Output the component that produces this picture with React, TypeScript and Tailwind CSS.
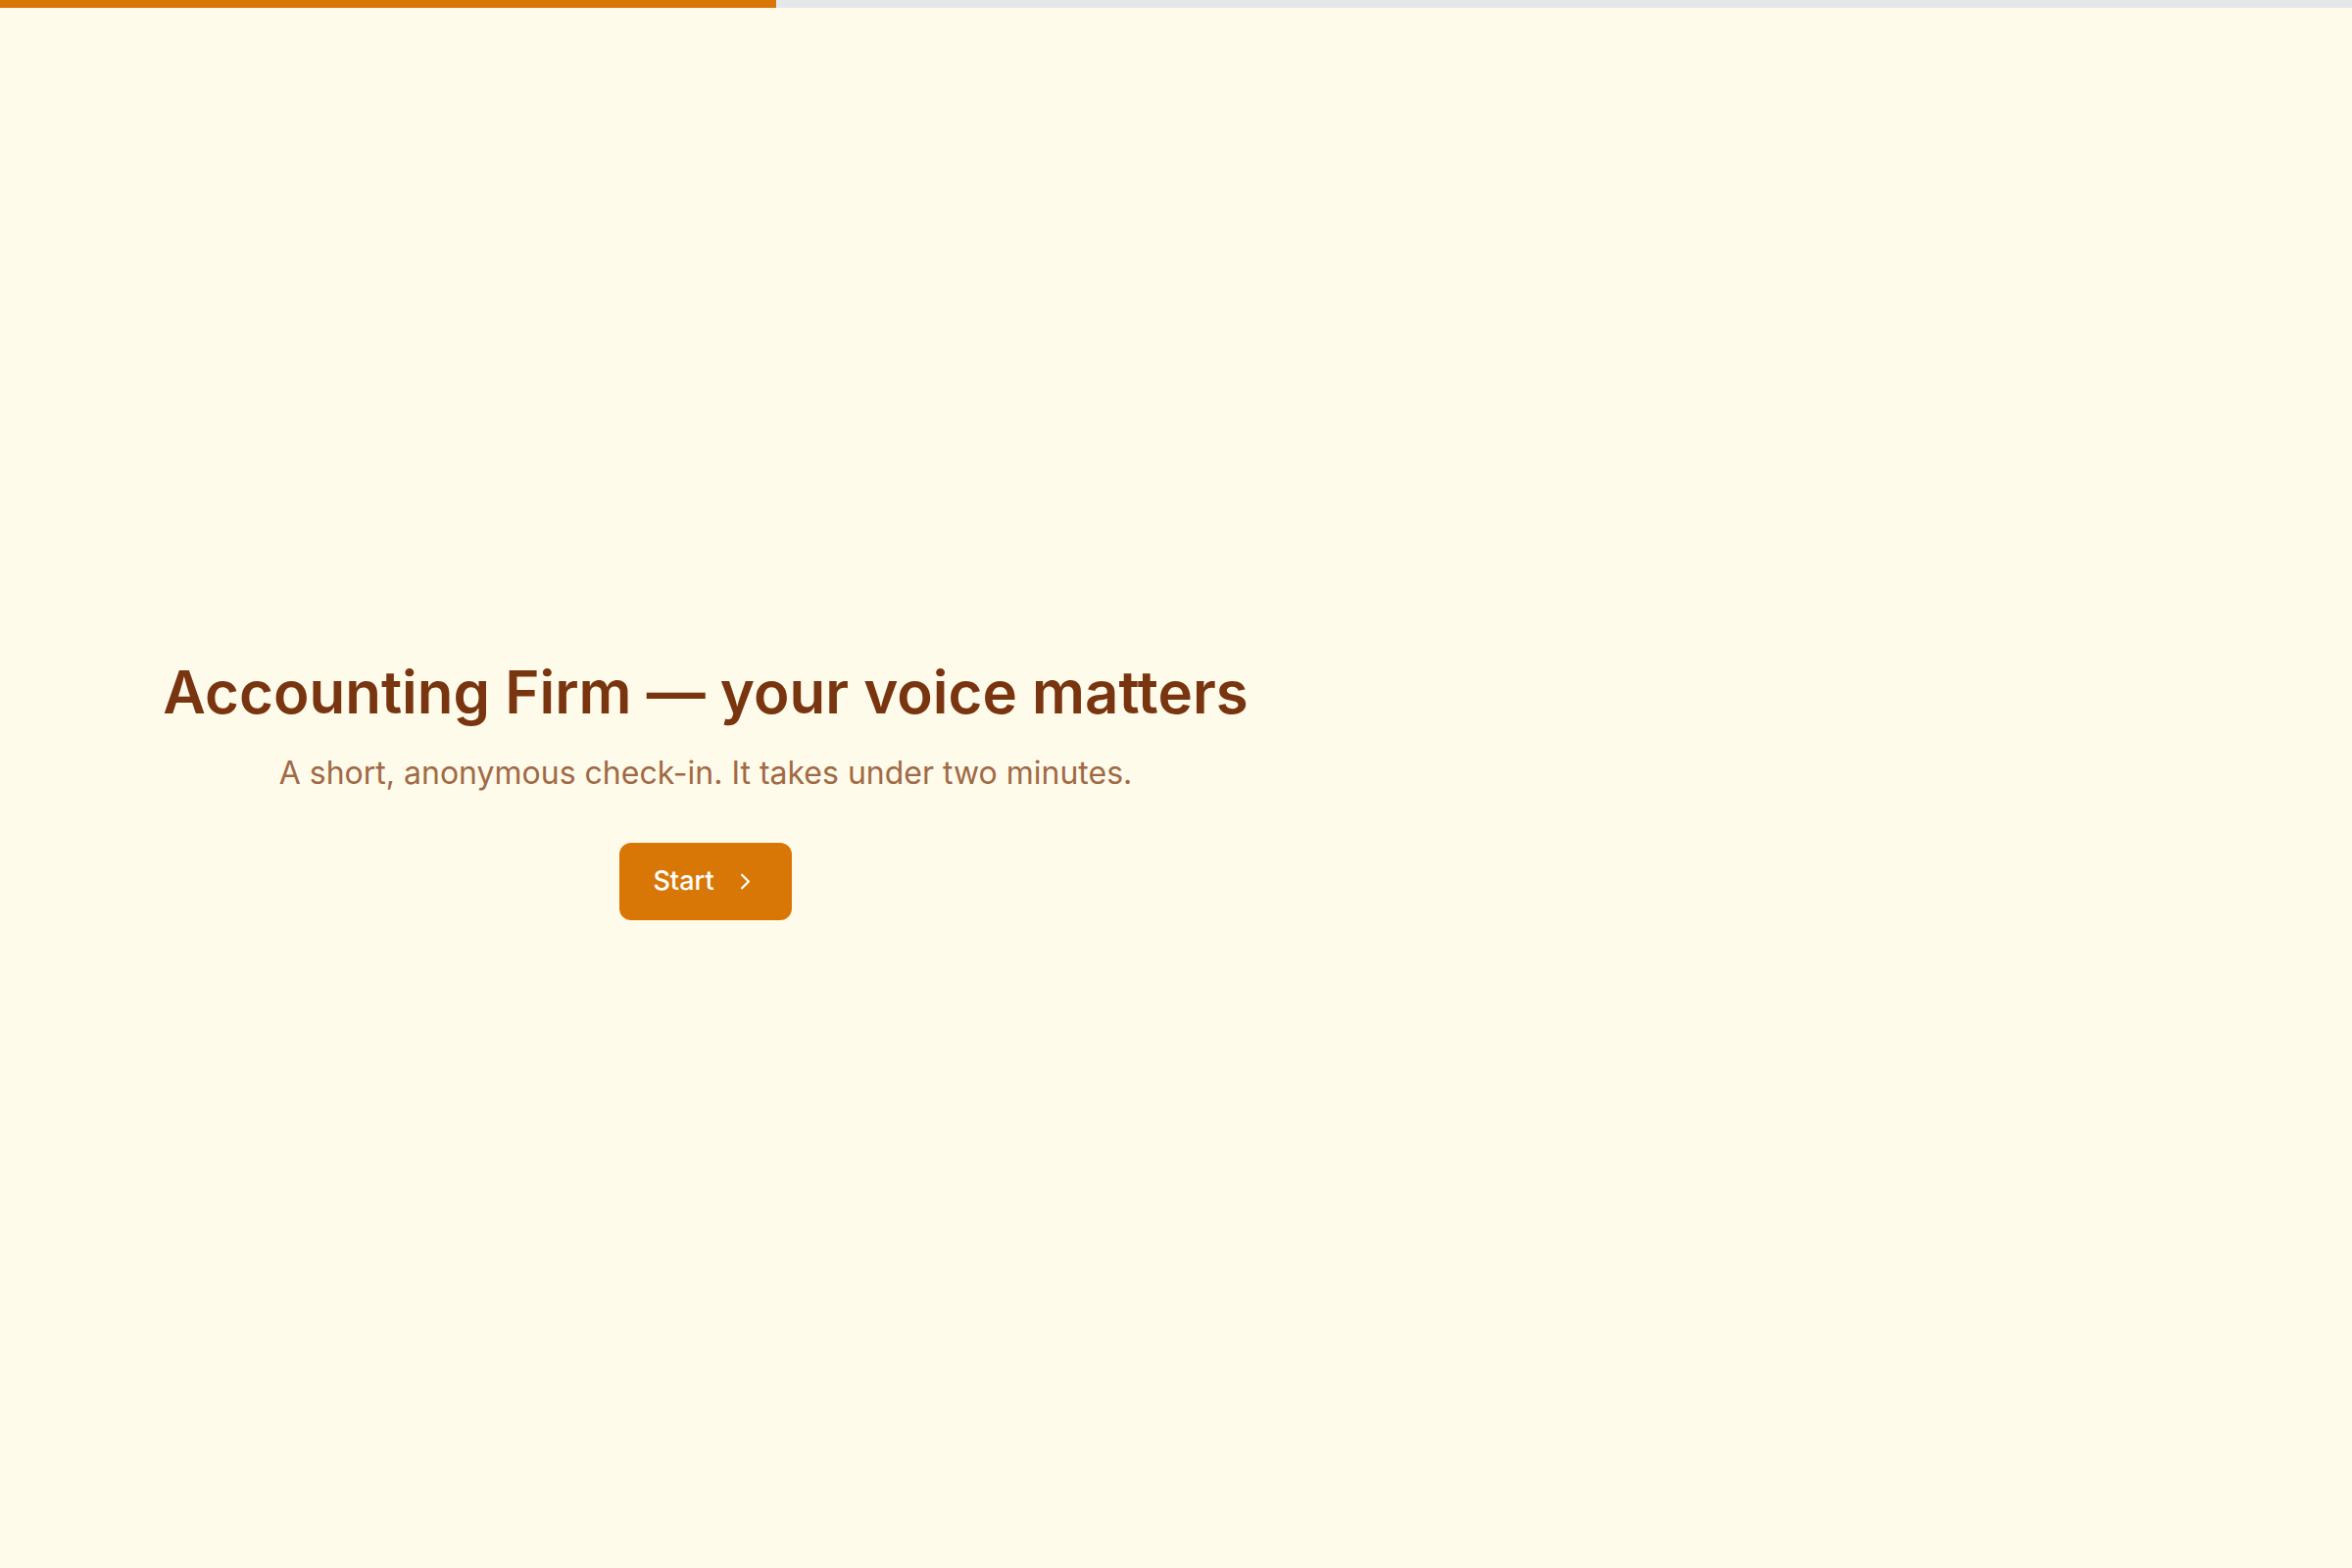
import { ChevronRight } from "lucide-react";

export default function App() {
  return (
    <div className="flex min-h-screen flex-col bg-[#fffbeb] font-['Inter','Noto_Sans',sans-serif]">
      {/* progress track */}
      <div className="h-2 w-full bg-[#e5e7eb]">
        <div className="h-full w-[33%] bg-[#d97706]" />
      </div>

      <main className="flex flex-1 items-center">
        <section className="flex w-[1440px] flex-col items-center text-center">
          <h1 className="text-[60px] font-semibold leading-[72px] text-[#78350f]">
            Accounting Firm — your voice matters
          </h1>
          <p className="mt-[24px] text-[32px] leading-[46px] text-[#a06a45]">
            A short, anonymous check-in. It takes under two minutes.
          </p>
          <button className="mt-[48px] flex h-[79px] items-center gap-[18px] rounded-xl bg-[#d97706] pl-[34px] pr-[34px] text-[27px] font-medium text-white">
            Start
            <ChevronRight size={27} strokeWidth={2} />
          </button>
        </section>
      </main>
    </div>
  );
}
